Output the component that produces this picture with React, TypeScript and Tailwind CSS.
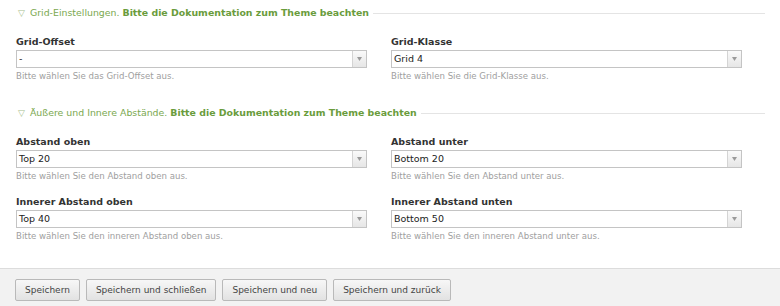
import React from "react";

const font = { fontFamily: '"DejaVu Sans", Verdana, sans-serif' };

function Legend({ light, bold }: { light: string; bold: string }) {
  return (
    <div className="flex items-center h-[14px] pl-[18px] pr-[15px]">
      <span className="text-[9px] text-[#a8c08e] mr-[5px] leading-none">▽</span>
      <span className="text-[9.4px] text-[#7aa84f] whitespace-nowrap leading-none">
        {light} <b className="font-bold text-[#6a9c3c]">{bold}</b>
      </span>
      <div className="flex-1 h-px bg-[#e4e4e4] ml-[4px]" />
    </div>
  );
}

function Field({ label, value, help }: { label: string; value: string; help: string }) {
  return (
    <div className="w-[351px]">
      <div className="text-[9.5px] font-bold text-[#333] leading-[12px] mb-[2px]">{label}</div>
      <div className="flex h-[18px] border border-[#c4c4c4] bg-white">
        <div className="flex-1 text-[9.5px] text-[#222] leading-[16px] pl-[2px]">{value}</div>
        <div className="w-[14px] border-l border-[#d4d4d4] bg-gradient-to-b from-[#fafafa] to-[#e6e6e6] flex items-center justify-center">
          <svg width="5" height="4" viewBox="0 0 5 4">
            <path d="M0 0 L5 0 L2.5 4 Z" fill="#9a9a9a" />
          </svg>
        </div>
      </div>
      <div className="text-[8.6px] text-[#a0a0a0] leading-[10px] mt-[3px]">{help}</div>
    </div>
  );
}

function Btn({ children }: { children: React.ReactNode }) {
  return (
    <button className="h-[22px] px-[9px] text-[9px] text-[#444] border border-[#b9b9b9] rounded-[2px] bg-gradient-to-b from-[#f7f7f7] to-[#e2e2e2] leading-none">
      {children}
    </button>
  );
}

export default function App() {
  return (
    <div className="w-[780px] h-[306px] bg-white flex flex-col" style={font}>
      <div className="pt-[6px]">
        <Legend light="Grid-Einstellungen." bold="Bitte die Dokumentation zum Theme beachten" />
        <div className="flex gap-[24px] pl-[16px] mt-[16px]">
          <Field label="Grid-Offset" value="-" help="Bitte wählen Sie das Grid-Offset aus." />
          <Field label="Grid-Klasse" value="Grid 4" help="Bitte wählen Sie die Grid-Klasse aus." />
        </div>
        <div className="mt-[25px]">
          <Legend light="Äußere und Innere Abstände." bold="Bitte die Dokumentation zum Theme beachten" />
        </div>
        <div className="flex gap-[24px] pl-[16px] mt-[16px]">
          <Field label="Abstand oben" value="Top 20" help="Bitte wählen Sie den Abstand oben aus." />
          <Field label="Abstand unter" value="Bottom 20" help="Bitte wählen Sie den Abstand unter aus." />
        </div>
        <div className="flex gap-[24px] pl-[16px] mt-[15px]">
          <Field label="Innerer Abstand oben" value="Top 40" help="Bitte wählen Sie den inneren Abstand oben aus." />
          <Field label="Innerer Abstand unten" value="Bottom 50" help="Bitte wählen Sie den inneren Abstand unter aus." />
        </div>
      </div>
      <div className="mt-auto h-[38px] border-t border-[#dcdcdc] bg-[#f2f2f2] flex items-start gap-[6px] pl-[15px] pt-[10px]">
        <Btn>Speichern</Btn>
        <Btn>Speichern und schließen</Btn>
        <Btn>Speichern und neu</Btn>
        <Btn>Speichern und zurück</Btn>
      </div>
    </div>
  );
}
